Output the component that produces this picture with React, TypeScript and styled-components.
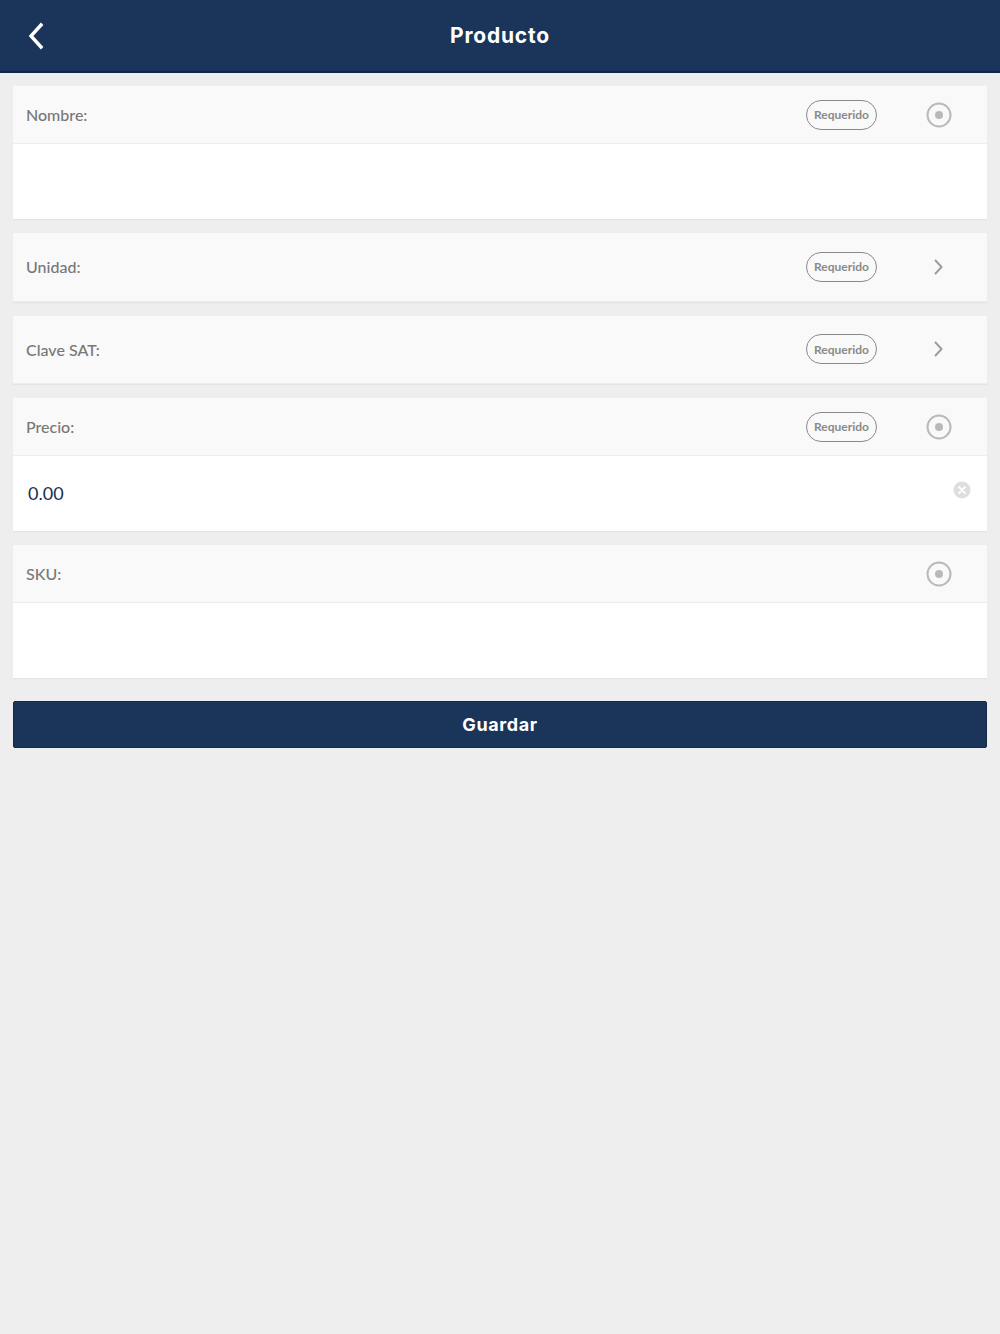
import * as React from 'react'
import styled, { createGlobalStyle } from 'styled-components'

const GlobalStyle = createGlobalStyle`
  body {
    margin: 0;
    background: #eeeeee;
    font-family: Lato, "Open Sans", sans-serif;
  }
`

type Field = {
  label: string
  required?: boolean
  kind: 'text' | 'select'
  value?: string
}

const fields: Field[] = [
  { label: 'Nombre:', required: true, kind: 'text' },
  { label: 'Unidad:', required: true, kind: 'select' },
  { label: 'Clave SAT:', required: true, kind: 'select' },
  { label: 'Precio:', required: true, kind: 'text', value: '0.00' },
  { label: 'SKU:', kind: 'text' },
]

function RadioIcon() {
  return (
    <svg width="28" height="28" viewBox="0 0 28 28">
      <circle cx="14" cy="14" r="11.5" fill="none" stroke="#b9b9b9" strokeWidth="2" />
      <circle cx="14" cy="14" r="4" fill="#b9b9b9" />
    </svg>
  )
}

function ChevronIcon() {
  return (
    <svg width="28" height="28" viewBox="0 0 28 28">
      <path d="M10.5 7.5 L16.5 14 L10.5 20.5" fill="none" stroke="#9d9d9d" strokeWidth="2" strokeLinecap="round" strokeLinejoin="round" />
    </svg>
  )
}

function ClearIcon() {
  return (
    <svg width="18" height="18" viewBox="0 0 18 18">
      <circle cx="9" cy="9" r="8.5" fill="#dedede" />
      <path d="M6 6 L12 12 M12 6 L6 12" stroke="#ffffff" strokeWidth="1.8" strokeLinecap="round" />
    </svg>
  )
}

function App() {
  return (
    <>
      <GlobalStyle />
      <Page>
        <Header>
          <BackButton>
            <svg width="20" height="28" viewBox="0 0 20 28">
              <path d="M15 3 L5 14 L15 25" fill="none" stroke="#ffffff" strokeWidth="3.4" strokeLinecap="square" />
            </svg>
          </BackButton>
          <Title>Producto</Title>
        </Header>
        <Form>
          {fields.map((f) => (
            <Card key={f.label}>
              <CardHead tall={f.kind === 'select'}>
                <Label>{f.label}</Label>
                <Right>
                  {f.required && <Badge>Requerido</Badge>}
                  <IconSlot>{f.kind === 'select' ? <ChevronIcon /> : <RadioIcon />}</IconSlot>
                </Right>
              </CardHead>
              {f.kind === 'text' && (
                <CardBody>
                  <Value>{f.value ?? ''}</Value>
                  {f.value && (
                    <ClearSlot>
                      <ClearIcon />
                    </ClearSlot>
                  )}
                </CardBody>
              )}
            </Card>
          ))}
          <SaveButton>Guardar</SaveButton>
        </Form>
      </Page>
    </>
  )
}

const Page = styled.div`
  min-height: 1334px;
  background: #eeeeee;
`

const Header = styled.header`
  position: relative;
  height: 71px;
  background: #1b3459;
  border-bottom: 2px solid #12284a;
  display: flex;
  align-items: center;
  justify-content: center;
`

const BackButton = styled.div`
  position: absolute;
  left: 26px;
  top: 22px;
  width: 20px;
  height: 28px;
`

const Title = styled.h1`
  margin: 0;
  color: #ffffff;
  font-family: Inter, "Open Sans", sans-serif;
  font-weight: 700;
  font-size: 21px;
  letter-spacing: 0.8px;
`

const Form = styled.main`
  padding: 13px 13px 0;
  display: flex;
  flex-direction: column;
  gap: 14px;
`

const Card = styled.section`
  background: #ffffff;
  box-shadow: 0 1px 1px rgba(0, 0, 0, 0.04);
`

const CardHead = styled.div<{ tall?: boolean }>`
  box-sizing: border-box;
  height: ${(p) => (p.tall ? '68.5px' : '58px')};
  background: #f9f9f9;
  border-bottom: 1px solid #ececec;
  display: flex;
  align-items: center;
  justify-content: space-between;
  padding: 0 34px 0 13px;
`

const Label = styled.span`
  font-size: 16px;
  color: #777777;
  font-weight: 500;
`

const Right = styled.div`
  display: flex;
  align-items: center;
  gap: 48px;
`

const Badge = styled.span`
  box-sizing: border-box;
  width: 71px;
  height: 30px;
  border: 1.5px solid #8a8a8a;
  border-radius: 15px;
  display: flex;
  align-items: center;
  justify-content: center;
  font-size: 12px;
  font-weight: 700;
  color: #8a8a8a;
`

const IconSlot = styled.span`
  width: 28px;
  height: 28px;
  display: flex;
`

const CardBody = styled.div`
  height: 75px;
  display: flex;
  align-items: center;
  justify-content: space-between;
  padding: 0 16px 0 15px;
`

const Value = styled.span`
  font-size: 18px;
  color: #1a2e50;
  margin-top: -2px;
`

const ClearSlot = styled.span`
  display: flex;
  margin-top: -8px;
`

const SaveButton = styled.button`
  margin-top: 9px;
  height: 47px;
  background: #1b3459;
  border: 1px solid #14294a;
  border-radius: 2px;
  color: #ffffff;
  font-family: Inter, "Open Sans", sans-serif;
  font-weight: 700;
  font-size: 18px;
  letter-spacing: 0.6px;
`

export default App
